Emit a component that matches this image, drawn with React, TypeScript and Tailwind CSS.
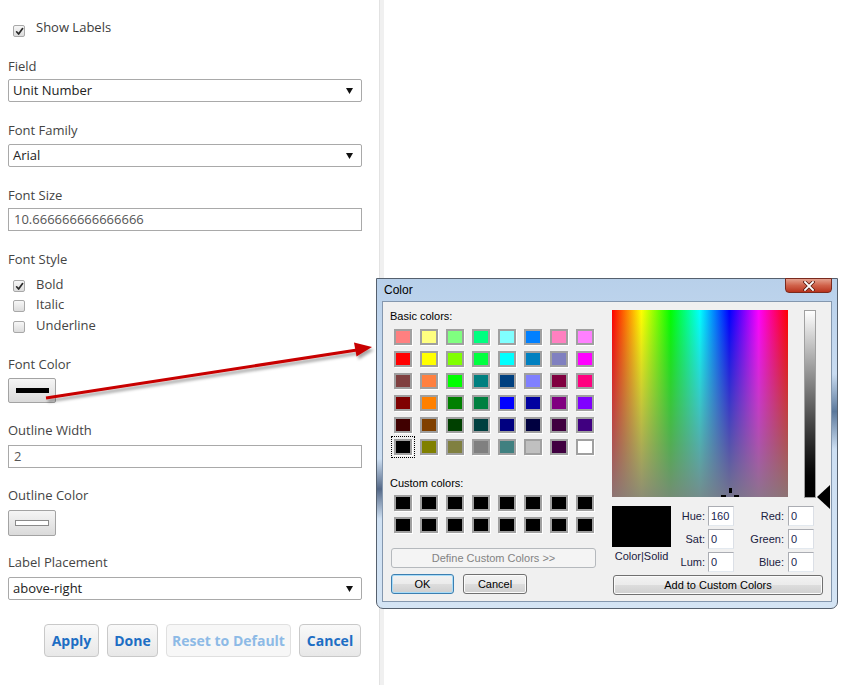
import React from "react";

const BASIC: string[][] = [
  ["#FF8080", "#FFFF80", "#80FF80", "#00FF80", "#80FFFF", "#0080FF", "#FF80C0", "#FF80FF"],
  ["#FF0000", "#FFFF00", "#80FF00", "#00FF40", "#00FFFF", "#0080C0", "#8080C0", "#FF00FF"],
  ["#804040", "#FF8040", "#00FF00", "#008080", "#004080", "#8080FF", "#800040", "#FF0080"],
  ["#800000", "#FF8000", "#008000", "#008040", "#0000FF", "#0000A0", "#800080", "#8000FF"],
  ["#400000", "#804000", "#004000", "#004040", "#000080", "#000040", "#400040", "#400080"],
  ["#000000", "#808000", "#808040", "#808080", "#408080", "#C0C0C0", "#400040", "#FFFFFF"],
];

function CheckBox({ checked, className = "" }: { checked?: boolean; className?: string }) {
  return (
    <span
      className={`flex h-[12px] w-[12px] shrink-0 items-center justify-center rounded-[2px] border border-[#a8a8a8] bg-linear-to-b from-[#f7f7f7] to-[#dcdcdc] ${className}`}
    >
      {checked && (
        <svg width="9" height="9" viewBox="0 0 9 9">
          <path
            d="M1.6 4.8 L3.6 7 L7.6 1.6"
            fill="none"
            stroke="#2a2a2a"
            strokeWidth="1.7"
            strokeLinecap="round"
            strokeLinejoin="round"
          />
        </svg>
      )}
    </span>
  );
}

function Label({ children, className = "" }: { children: React.ReactNode; className?: string }) {
  return <div className={`h-[18px] text-[13px] leading-[18px] text-[#444] ${className}`}>{children}</div>;
}

function Select({ value, className = "" }: { value: string; className?: string }) {
  return (
    <div
      className={`flex h-[23px] w-[354px] items-center rounded-[2px] border border-[#a9a9a9] bg-white pl-[4px] pr-[8px] text-[13px] text-[#222] ${className}`}
    >
      <span className="flex-1">{value}</span>
      <svg width="7" height="6" viewBox="0 0 7 6">
        <path d="M0 0H7L3.5 6Z" fill="#111" />
      </svg>
    </div>
  );
}

function TextInput({ value, className = "" }: { value: string; className?: string }) {
  return (
    <div
      className={`flex h-[23px] w-[354px] items-center border border-[#a9a9a9] bg-white pl-[5px] text-[13px] text-[#555] ${className}`}
    >
      {value}
    </div>
  );
}

function StyleRow({ label, checked, className = "" }: { label: string; checked?: boolean; className?: string }) {
  return (
    <div className={`flex h-[20px] items-start ${className}`}>
      <CheckBox checked={checked} className="ml-[5px] mt-[5px]" />
      <span className="ml-[11px] text-[13px] leading-[18px] text-[#444]">{label}</span>
    </div>
  );
}

function LeftPanel() {
  const btn =
    "flex h-[33px] items-center justify-center rounded-[4px] border text-[14px] font-bold";
  return (
    <div className="flex h-full w-[379px] shrink-0 flex-col pl-[8px] pt-[18px]">
      <div className="flex h-[18px] items-start">
        <CheckBox checked className="ml-[5px] mt-[7px]" />
        <span className="ml-[11px] text-[13px] leading-[18px] text-[#3c3c3c]">Show Labels</span>
      </div>

      <Label className="mt-[21px]">Field</Label>
      <Select value="Unit Number" className="mt-[4px]" />

      <Label className="mt-[19px]">Font Family</Label>
      <Select value="Arial" className="mt-[5px]" />

      <Label className="mt-[19px]">Font Size</Label>
      <TextInput value="10.666666666666666" className="mt-[4px]" />

      <Label className="mt-[19px]">Font Style</Label>
      <StyleRow label="Bold" checked className="mt-[7px]" />
      <StyleRow label="Italic" />
      <StyleRow label="Underline" className="h-[21px] pt-[1px]" />

      <Label className="mt-[19px]">Font Color</Label>
      <div className="mt-[5px] flex h-[25px] w-[48px] items-center justify-center rounded-[2px] border border-[#a3a3a3] bg-linear-to-b from-[#f5f5f5] to-[#dadada]">
        <div className="h-[5px] w-[33px] bg-black" />
      </div>

      <Label className="mt-[18px]">Outline Width</Label>
      <TextInput value="2" className="mt-[6px]" />

      <Label className="mt-[18px]">Outline Color</Label>
      <div className="mt-[6px] flex h-[26px] w-[48px] items-center justify-center rounded-[2px] border border-[#a3a3a3] bg-linear-to-b from-[#f5f5f5] to-[#dadada]">
        <div className="h-[6px] w-[34px] border border-[#8a8a8a] bg-white" />
      </div>

      <Label className="mt-[17px]">Label Placement</Label>
      <Select value="above-right" className="mt-[6px]" />

      <div className="mt-[24px] flex w-[353px] justify-end gap-[8px]">
        <div className={`${btn} w-[55px] border-[#c9c9c9] bg-linear-to-b from-[#f9f9f9] to-[#e8e8e8] text-[#1d6ec4]`}>Apply</div>
        <div className={`${btn} w-[51px] border-[#c9c9c9] bg-linear-to-b from-[#f9f9f9] to-[#e8e8e8] text-[#1d6ec4]`}>Done</div>
        <div className={`${btn} w-[125px] border-[#e0e0e0] bg-[#f7f7f7] text-[#8dbae6]`}>Reset to Default</div>
        <div className={`${btn} w-[62px] border-[#c9c9c9] bg-linear-to-b from-[#f9f9f9] to-[#e8e8e8] text-[#1d6ec4]`}>Cancel</div>
      </div>
    </div>
  );
}

function Swatch({ color, selected }: { color: string; selected?: boolean }) {
  return (
    <div
      className={`h-[16px] w-[18px] border-2 border-[#a0a0a0] shadow-[1px_1px_0_#ffffff] ${
        selected ? "outline-1 outline-offset-[2px] outline-dotted outline-black" : ""
      }`}
      style={{ backgroundColor: color }}
    />
  );
}

const winBtn =
  "flex h-[20px] items-center justify-center rounded-[3px] border bg-[linear-gradient(to_bottom,#f2f2f2_0%,#ebebeb_49%,#dddddd_50%,#cfcfcf_100%)] text-[11px]";

function ColorDialog() {
  const fieldInput =
    "flex h-[20px] w-[26px] items-center border border-[#abadb3] border-b-[#e3e9ef] border-r-[#dbdfe6] bg-white pl-[2px] text-[11px] text-[#1a2550]";
  const fieldLabel = "flex h-[20px] items-center justify-end text-[11px] text-[#1a2040]";
  return (
    <div className="absolute left-[376px] top-[278px] flex h-[331px] w-[462px] flex-col rounded-b-[7px] border border-[#55606e] bg-[linear-gradient(to_bottom,#b8d0ea_0%,#c9dcf1_30%,#d4e4f4_100%)] font-['Liberation_Sans',Arial,sans-serif] text-black">
      {/* blurred backdrop tints on the aero frame */}
      <div className="absolute right-0 top-[95px] h-[75px] w-[6px] bg-linear-to-b from-transparent via-[#3f5f86] to-transparent opacity-80" />
      <div className="absolute left-0 top-[180px] h-[60px] w-[6px] bg-linear-to-b from-transparent via-[#1f3458] to-transparent opacity-70" />

      <div className="relative flex h-[22px] items-center pl-[7px] text-[12px] text-black">
        Color
        <div className="absolute right-[5px] top-[-1px] flex h-[15px] w-[47px] items-center justify-center rounded-b-[4px] border border-[#7a2a1e] bg-linear-to-b from-[#e3a08e] via-[#d0614a] to-[#b8321c]">
          <svg width="12" height="10" viewBox="0 0 12 10">
            <path d="M2 1 L10 9 M10 1 L2 9" stroke="#5a1a10" strokeWidth="3.4" strokeLinecap="square" />
            <path d="M2 1 L10 9 M10 1 L2 9" stroke="#ffffff" strokeWidth="1.8" strokeLinecap="square" />
          </svg>
        </div>
      </div>

      <div className="relative mx-[5px] mb-[6px] flex flex-1 border border-[#8497ae] bg-[#f0f0f0]">
        {/* left column */}
        <div className="flex w-[229px] shrink-0 flex-col pl-[7px] pt-[8px]">
          <div className="h-[13px] text-[11px] leading-[13px]">Basic colors:</div>
          <div className="ml-[4px] mt-[6px] grid w-max grid-cols-8 gap-x-[8px] gap-y-[6px]">
            {BASIC.flatMap((row, r) =>
              row.map((c, i) => <Swatch key={`${r}-${i}`} color={c} selected={r === 5 && i === 0} />)
            )}
          </div>
          <div className="mt-[22px] h-[13px] text-[11px] leading-[13px]">Custom colors:</div>
          <div className="ml-[4px] mt-[5px] grid w-max grid-cols-8 gap-x-[8px] gap-y-[6px]">
            {Array.from({ length: 16 }).map((_, i) => (
              <Swatch key={i} color="#000000" />
            ))}
          </div>
          <div className="ml-[1px] mt-[15px] flex h-[20px] w-[205px] items-center justify-center rounded-[3px] border border-[#b5b9bd] bg-[#f4f4f4] text-[11px] text-[#838383]">
            Define Custom Colors &gt;&gt;
          </div>
          <div className="ml-[1px] mt-[6px] flex gap-[9px]">
            <div className={`${winBtn} w-[63px] border-[#3c7fb1] shadow-[inset_0_0_0_1px_#a8dcf8]`}>OK</div>
            <div className={`${winBtn} w-[64px] border-[#707070] shadow-[inset_0_0_0_1px_#fbfbfb]`}>Cancel</div>
          </div>
        </div>

        {/* right column */}
        <div className="flex flex-col pt-[8px]">
          <div className="flex">
            <svg width="176" height="187" className="block">
              <defs>
                <linearGradient id="hue" x1="0" x2="1" y1="0" y2="0">
                  <stop offset="0" stopColor="#ff0000" />
                  <stop offset="0.1667" stopColor="#ffff00" />
                  <stop offset="0.3333" stopColor="#00ff00" />
                  <stop offset="0.5" stopColor="#00ffff" />
                  <stop offset="0.6667" stopColor="#0000ff" />
                  <stop offset="0.8333" stopColor="#ff00ff" />
                  <stop offset="1" stopColor="#ff0000" />
                </linearGradient>
                <linearGradient id="sat" x1="0" x2="0" y1="0" y2="1">
                  <stop offset="0" stopColor="#808080" stopOpacity="0" />
                  <stop offset="1" stopColor="#808080" stopOpacity="0.9" />
                </linearGradient>
              </defs>
              <rect width="176" height="187" fill="url(#hue)" />
              <rect width="176" height="187" fill="url(#sat)" />
              <rect x="117" y="178" width="3" height="5" fill="#000" />
              <rect x="109" y="185" width="5" height="2" fill="#000" />
              <rect x="122" y="185" width="5" height="2" fill="#000" />
            </svg>
            <div className="relative ml-[16px]">
              <div className="h-[188px] w-[12px] border border-[#a0a0a0] bg-linear-to-b from-white to-black" />
              <svg className="absolute left-[13px] top-[175px]" width="13" height="24" viewBox="0 0 13 24">
                <path d="M0 12 L13 0 L13 24Z" fill="#000" />
              </svg>
            </div>
          </div>

          <div className="mt-[8px] flex">
            <div className="flex w-[59px] flex-col">
              <div className="h-[41px] w-[59px] bg-black" />
              <div className="mt-[3px] h-[13px] text-center text-[11px] leading-[13px] text-[#1a2040]">Color|Solid</div>
            </div>
            <div className="grid grid-cols-[34px_29px_50px_30px] gap-y-[3px]">
              <div className={fieldLabel}>Hue:</div>
              <div className={`${fieldInput} ml-[3px]`}>160</div>
              <div className={fieldLabel}>Red:</div>
              <div className={`${fieldInput} ml-[4px]`}>0</div>

              <div className={fieldLabel}>Sat:</div>
              <div className={`${fieldInput} ml-[3px]`}>0</div>
              <div className={fieldLabel}>Green:</div>
              <div className={`${fieldInput} ml-[4px]`}>0</div>

              <div className={fieldLabel}>Lum:</div>
              <div className={`${fieldInput} ml-[3px]`}>0</div>
              <div className={fieldLabel}>Blue:</div>
              <div className={`${fieldInput} ml-[4px]`}>0</div>
            </div>
          </div>

          <div className={`${winBtn} ml-[1px] mt-[3px] w-[210px] border-[#707070] shadow-[inset_0_0_0_1px_#fbfbfb]`}>
            Add to Custom Colors
          </div>
        </div>
      </div>
    </div>
  );
}

function Arrow() {
  return (
    <svg className="pointer-events-none absolute left-0 top-0" width="857" height="685">
      <defs>
        <filter id="sh" x="-10%" y="-60%" width="120%" height="220%">
          <feDropShadow dx="2" dy="3" stdDeviation="1.5" floodColor="#000" floodOpacity="0.35" />
        </filter>
      </defs>
      <g filter="url(#sh)">
        <line x1="46" y1="398" x2="357" y2="350" stroke="#c80000" strokeWidth="3" />
        <polygon points="372,347 354,342.5 356.5,356.5" fill="#c80000" />
      </g>
    </svg>
  );
}

export default function App() {
  return (
    <div className="relative h-[685px] w-[857px] overflow-hidden bg-white font-['Open_Sans',sans-serif]">
      <div className="flex h-full">
        <LeftPanel />
        <div className="h-full w-[5px] border-l border-[#e2e2e2] bg-[#f0f0f0]" />
        <div className="flex-1 bg-white" />
      </div>
      <ColorDialog />
      <Arrow />
    </div>
  );
}
